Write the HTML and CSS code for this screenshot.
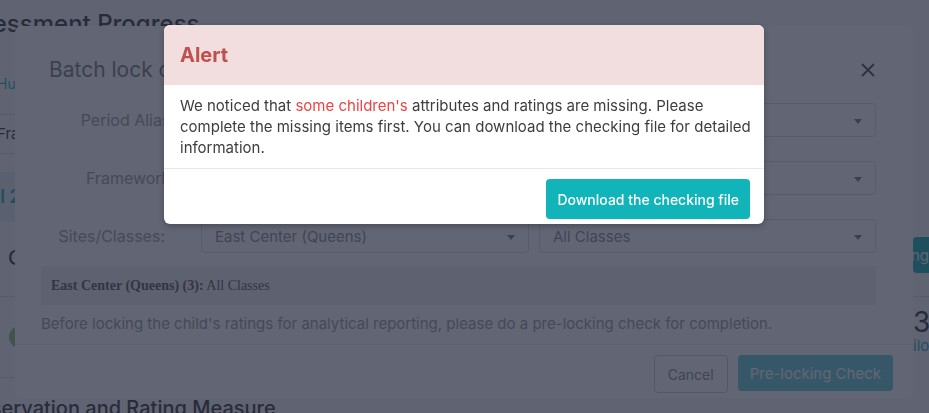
FILE: index.html
```html
<!DOCTYPE html>
<html lang="en">
<head>
    <meta charset="UTF-8">
    <meta name="viewport" content="width=device-width, initial-scale=1.0">
    <title>Assessment Progress</title>
    <link rel="stylesheet" href="styles.css">
</head>
<body>

    <div class="page">
        <h1 class="page-title">Assessment Progress</h1>
        <div class="page-main">
            <div class="content">
                <div class="tabs"><span class="tab">Hub Overview</span></div>
                <div class="filter-row">Framework</div>
                <div class="period-band">Fall 2023-2024</div>
                <div class="section-title">Group Summary</div>
                <div class="child-row"><span class="avatar"></span>Children</div>
            </div>
            <div class="side">
                <button class="side-btn">Checking</button>
                <div class="side-card">
                    <div class="side-num">33</div>
                    <div class="side-link">ilots</div>
                </div>
            </div>
        </div>
        <h2 class="page-subtitle">Observation and Rating Measure</h2>
    </div>

    <div class="backdrop light"></div>

    <div class="modal">
        <div class="modal-head">
            <h3>Batch lock child ratings</h3>
            <button class="close">
                <svg width="14" height="14" viewBox="0 0 14 14"><path d="M1 1L13 13M13 1L1 13" stroke="currentColor" stroke-width="1.8" fill="none"/></svg>
            </button>
        </div>
        <div class="modal-body">
            <div class="form-row">
                <label>Period Alias:</label>
                <div class="select">2023-2024 Fall</div>
            </div>
            <div class="form-row">
                <label>Framework:</label>
                <div class="select">DRDP (2015) Preschool</div>
            </div>
            <div class="form-row sites">
                <label>Sites/Classes:</label>
                <div class="select-pair">
                    <div class="select">East Center (Queens)</div>
                    <div class="select">All Classes</div>
                </div>
            </div>
            <div class="picked"><b>East Center (Queens) (3):</b> All Classes</div>
            <p class="note">Before locking the child's ratings for analytical reporting, please do a pre-locking check for completion.</p>
        </div>
        <div class="modal-foot">
            <button class="btn btn-default">Cancel</button>
            <button class="btn btn-primary" disabled>Pre-locking Check</button>
        </div>
    </div>

    <div class="backdrop"></div>

    <div class="alert">
        <div class="alert-head">Alert</div>
        <div class="alert-body">
            We noticed that <span class="warn">some children's</span> attributes and ratings are missing. Please complete the missing items first. You can download the checking file for detailed information.
        </div>
        <div class="alert-foot">
            <button class="btn btn-teal">Download the checking file</button>
        </div>
    </div>

</body>
</html>
```

FILE: styles.css
```css
body{
    margin:0;
    height:413px;
    overflow:hidden;
    font-family: Inter, "Noto Sans", sans-serif;
    color:#333;
    background:#fff;
}
button{
    font-family: inherit;
}

/* page behind the dialogs */
.page{
    padding-top:8px;
}
.page-title{
    margin:0 0 0 -50px;
    font-size:24px;
    font-weight:500;
    line-height:32px;
}
.page-main{
    display:grid;
    grid-template-columns: 1fr 130px;
    margin-right:-114px;
}
.content{
    margin-left:-3px;
}
.tabs{
    padding:34px 0 21px;
    line-height:18px;
    border-bottom:1px solid #ddd;
}
.tab{
    color:#10b4b9;
    font-size:14px;
}
.filter-row{
    height:38px;
    line-height:38px;
    font-size:15px;
    border-bottom:1px solid #ddd;
}
.period-band{
    margin-top:18px;
    height:50px;
    line-height:50px;
    background:#e4f6f7;
    color:#10b4b9;
    font-weight:600;
    font-size:18px;
    text-indent:-22px;
}
.section-title{
    margin-top:24px;
    padding-left:11px;
    height:50px;
    line-height:24px;
    font-size:20px;
    font-weight:500;
    border-bottom:1px solid #ddd;
}
.child-row{
    display:flex;
    align-items:center;
    gap:10px;
    height:80px;
    padding-left:12px;
    border-bottom:1px solid #ddd;
}
.avatar{
    width:22px;
    height:22px;
    border-radius:50%;
    background:#8dc26f;
}
.side{
    padding-top:197px;
}
.side-btn{
    display:block;
    height:36px;
    border:0;
    border-radius:4px 0 0 4px;
    background:#10b4b9;
    color:#fff;
    font-size:15px;
    padding:0;
    text-indent:-51px;
    width:100%;
    text-align:left;
}
.side-card{
    margin-top:23px;
    border-top:1px solid #ddd;
    padding-top:10px;
}
.side-num{
    font-size:28px;
    line-height:30px;
}
.side-link{
    color:#10b4b9;
    font-size:15px;
    line-height:18px;
}
.page-subtitle{
    margin:15px 0 0 -37px;
    font-size:20px;
    font-weight:500;
    line-height:30px;
}

/* dim layers */
.backdrop{
    position:fixed;
    inset:0;
    background:rgba(38,42,62,.72);
}
.backdrop.light{
    background:rgba(0,0,0,.03);
}

/* batch lock dialog */
.modal{
    position:fixed;
    top:26px;
    left:15px;
    width:898px;
    background:#fff;
    border-radius:6px;
    box-sizing:border-box;
}
.modal-head{
    display:flex;
    justify-content:space-between;
    align-items:center;
    padding:29px 38px 0 34px;
}
.modal-head h3{
    margin:0;
    font-size:21px;
    font-weight:400;
    line-height:30px;
    color:#777;
}
.close{
    border:0;
    background:none;
    padding:0;
    color:#444;
    display:flex;
}
.modal-body{
    padding:18px 37px 10px 26px;
}
.form-row{
    display:grid;
    grid-template-columns:160px 1fr;
    align-items:center;
    margin-bottom:24px;
}
.form-row label{
    text-align:right;
    margin-right:-10px;
    padding-right:36px;
    font-size:16px;
    color:#9a9a9a;
}
.form-row.sites{
    margin-bottom:13px;
}
.form-row.sites label{
    margin-right:0;
}
.select{
    position:relative;
    height:34px;
    line-height:34px;
    box-sizing:border-box;
    border:1px solid #dcdcdc;
    border-radius:4px;
    padding-left:13px;
    font-size:15px;
    color:#8a8a8a;
}
.select::after{
    content:'';
    position:absolute;
    right:13px;
    top:15px;
    border-left:4px solid transparent;
    border-right:4px solid transparent;
    border-top:5px solid #777;
}
.select-pair{
    display:grid;
    grid-template-columns:328px 1fr;
    gap:10px;
}
.picked{
    height:39px;
    line-height:39px;
    background:#efeff1;
    padding-left:10px;
    font-family:"Liberation Serif", serif;
    font-size:14px;
    color:#555;
}
.note{
    margin:8px 0 0;
    font-size:15px;
    line-height:21px;
    color:#999;
}
.modal-foot{
    display:flex;
    justify-content:flex-end;
    align-items:flex-start;
    gap:10px;
    border-top:1px solid #e8e8e8;
    padding:10px 20px 5px;
}
.btn{
    border-radius:4px;
    font-size:14px;
    padding:0 13px;
}
.btn-default{
    height:38px;
    background:#fff;
    border:1px solid #ccc;
    color:#888;
}
.btn-primary{
    height:36px;
    border:0;
    background:#10b4b9;
    color:#fff;
    opacity:.65;
    font-size:15px;
    padding:0 12px;
}

/* alert on top */
.alert{
    position:fixed;
    top:25px;
    left:164px;
    width:600px;
    background:#fff;
    border-radius:6px;
    overflow:hidden;
    box-shadow:0 2px 6px rgba(0,0,0,.25);
}
.alert-head{
    height:60px;
    line-height:60px;
    padding-left:16px;
    background:#f2dede;
    color:#c0504d;
    font-size:20px;
    font-weight:700;
}
.alert-body{
    padding:10px 10px 10px 16px;
    font-size:15px;
    line-height:21px;
    color:#3d3d3d;
    border-bottom:1px solid #e8e8e8;
}
.warn{
    color:#ef4242;
}
.alert-foot{
    display:flex;
    justify-content:flex-end;
    padding:10px 14px 5px;
}
.btn-teal{
    height:40px;
    border:0;
    background:#10b4b9;
    color:#fff;
    font-weight:500;
    padding:0 11px;
}
```
